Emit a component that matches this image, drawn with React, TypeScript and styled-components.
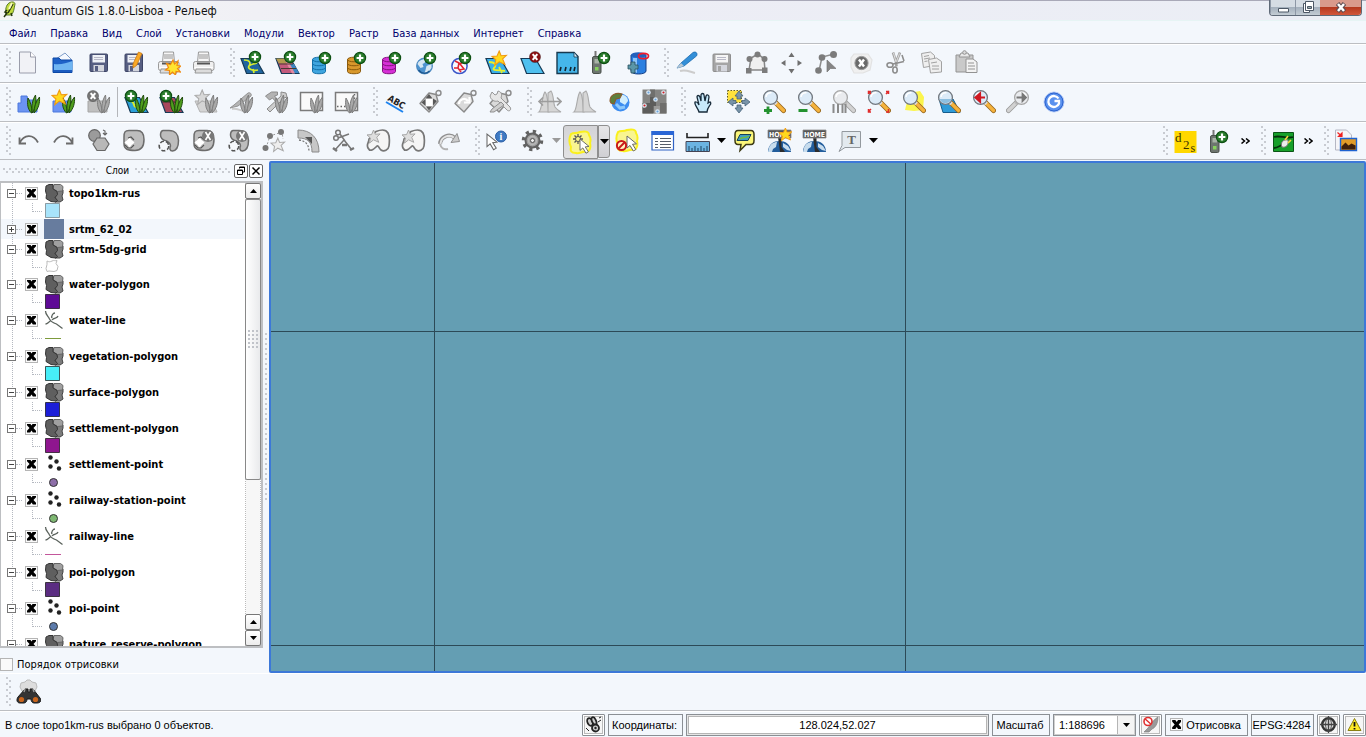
import React from "react";
import styled, { createGlobalStyle, css } from "styled-components";

const tahoma = `"DejaVu Sans Condensed", "DejaVu Sans", sans-serif`;
const arial = `"Liberation Sans", sans-serif`;
const dots = "#c8cbd1";
const line = "#bcbec2";

const GlobalStyle = createGlobalStyle`
  *, *::before, *::after { box-sizing: border-box; }
  body { margin: 0; background: #f3f7fc; color: #000; font: 11px/14px ${tahoma}; }
  button, input, select { font: inherit; color: inherit; margin: 0; }
  svg { display: block; flex: none; }
`;

/* ---------- shared drawing parts ---------- */

const G = "#8a8a8a";

const Plus = ({ x = 15, y = 8 }: { x?: number; y?: number }) => (
  <g>
    <circle cx={x} cy={y} r="5.600" fill="#2a7d2c" stroke="#0d4f13" strokeWidth="1.200" />
    <path d={`M${x - 3.4} ${y}h6.800M${x} ${y - 3.4}v6.800`} stroke="#fff" strokeWidth="2.200" />
  </g>
);
const Cross = ({ x = 14, y = 8, fill = "#8b1214" }: { x?: number; y?: number; fill?: string }) => (
  <g>
    <circle cx={x} cy={y} r="5.600" fill={fill} stroke="#0004" strokeWidth="1" />
    <path d={`M${x - 2.3} ${y - 2.8}l4.600 5.600M${x + 2.3} ${y - 2.8}l-4.600 5.600`} stroke="#fff" strokeWidth="2" />
  </g>
);
const Star = ({ x = 0, y = 0, s = 1, fill = "#ffd91c", stroke = "#f09a12" }: { x?: number; y?: number; s?: number; fill?: string; stroke?: string }) => (
  <path transform={`translate(${x} ${y}) scale(${s})`} d="M8 0l2.100 5.200 5.900-.4-4.200 4 2.600 6.200L8 12l-5 4 1.200-6.200L0 6l5.600-.4z" fill={fill} stroke={stroke} strokeWidth="1.200" />
);
const Db = ({ fill, edge }: { fill: string; edge: string }) => (
  <g fill={fill} stroke={edge} strokeWidth="1">
    <path d="M2.500 9.500v12c0 3 13 3 13 0v-12z" />
    <ellipse cx="9" cy="9.500" rx="6.500" ry="2.300" />
    <path d="M2.500 13.500c0 3 13 3 13 0M2.500 17.500c0 3 13 3 13 0" fill="none" />
  </g>
);
const Sheet = ({ fill = "#3ab0e8" }: { fill?: string }) => (
  <path d="M1 8.500h14.500L24 23.500H6.500z" fill={fill} stroke="#163a56" strokeWidth="1.200" />
);
const Grass = ({ gray = false }: { gray?: boolean }) => (
  <g fill={gray ? "#a9a9a9" : "#4f9e1d"} stroke={gray ? "#7d7d7d" : "#1f4a0c"} strokeWidth="1">
    <path d="M15.500 24C11.500 20 11 15 12 9c2.500 4 4 9 4 15z" />
    <path d="M16.500 24c-1.500-7 0-13 3-18 1 6 0 13-3 18z" />
    <path d="M18 24c0-6 2-12 5.500-16 .5 6-1 12-5.500 16z" />
  </g>
);
const Printer = () => (
  <g stroke="#8e8e8e" strokeWidth=".9">
    <path d="M7.500 2h10l1 10h-12z" fill="#f6f6f6" />
    <path d="M8 4h9v5H8z" fill="#c6c6c6" stroke="none" />
    <rect x="2.500" y="11.500" width="20.500" height="9" rx="2" fill="#f0f0f0" />
    <path d="M6 12.500h13v2H6z" fill="#555" stroke="none" />
    <path d="M5 19h15l1 4H4z" fill="#dcdcdc" />
    <path d="M3.500 17.500h18.500" stroke="#fff" />
  </g>
);
const Floppy = ({ body = "#565e82", edge = "#3d4566", paper = "#eef1f6" }: { body?: string; edge?: string; paper?: string }) => (
  <g>
    <rect x="4" y="4" width="17.500" height="17.500" rx="1" fill={body} stroke={edge} />
    <path d="M6.500 5h12.500v7.500H6.500z" fill={paper} />
    <path d="M8 7.500h9M8 9.500h9" stroke="#aab" strokeWidth=".8" />
    <path d="M7.500 15h10.500v6.500H7.500z" fill="#d4d6dd" />
    <path d="M9 16h3v5H9z" fill={body} />
  </g>
);
const Lens = ({ gray = false, flip = false, children }: { gray?: boolean; flip?: boolean; children?: React.ReactNode }) => (
  <g>
    <g transform={flip ? "translate(25 0) scale(-1 1)" : undefined}>
      <path d="M14.500 13.500l8 8" stroke={gray ? "#9b9b9b" : "#9a6a20"} strokeWidth="5" strokeLinecap="round" />
      <path d="M15 14l7.500 7.500" stroke={gray ? "#d2d2d2" : "#f6b33c"} strokeWidth="3.200" strokeLinecap="round" />
      <path d="M13 12.500l2.500 2.500" stroke={gray ? "#bbb" : "#dcdcdc"} strokeWidth="3.500" />
      <circle cx="9.500" cy="8.500" r="6.900" fill={gray ? "#e9ebee" : "#dcebf8"} stroke={gray ? "#a7a7a7" : "#71777e"} strokeWidth="1.300" />
      <path d="M5 8A4.500 4.500 0 0 1 10.500 3.800" stroke="#fff" strokeWidth="1.500" fill="none" />
    </g>
    {children}
  </g>
);
const Globe = ({ x = 9.5, y = 16, r = 8 }: { x?: number; y?: number; r?: number }) => (
  <g transform={`translate(${x} ${y}) scale(${r / 8})`}>
    <circle r="8" fill="#4d93cf" stroke="#3877b0" strokeWidth=".7" />
    <path d="M-7-2c1-4 6-5 9-5l-2 4-2 1 1 3-3 1zM2 0l5-2v4l-4 5-3 0 1-3z" fill="#d5e6f2" />
    <path d="M-6 4c3 4 8 4 11 1" stroke="#1d5890" fill="none" strokeWidth="1.500" />
  </g>
);
const Gps = () => (
  <g>
    <path d="M4.500 7V1h2v6z" fill="#777" />
    <rect x="2.500" y="6.500" width="8.500" height="17" rx="1.500" fill="#6d756f" stroke="#4a514c" />
    <path d="M4.500 9h4.500v4.500H4.500z" fill="#a8b3a6" />
    <path d="M5 17h3.500v3.500H5z" fill="#86d15d" />
  </g>
);
const Pointer = ({ x, y, s = 1 }: { x: number; y: number; s?: number }) => (
  <path transform={`translate(${x} ${y}) scale(${s})`} d="M0 0v12l3-2.600 3.300 5.600 2.500-1.500-3.300-5.200 4-.5z" fill="#fff" stroke="#666" strokeWidth="1" />
);
const YellowBlob = () => <path d="M3 4c3-2 5 0 9-2 4-1 9-1 9 3 2 3 2 5 1 8 1 4 0 9-4 9-4-1-6 2-10 1-5 0-6-2-5-6C1 13 1 8 3 4z" fill="#f9f590" stroke="#faf01e" strokeWidth="2" />;
const Home = ({ star = false }: { star?: boolean }) => (
  <g>
    <path d="M1 24c0-8 6-11 11.500-11S24 16 24 24z" fill="#225d9c" />
    <path d="M2 20c1-4 5-6 8-6l-1 5-3 2-1 3H1zM16 15l5 3 3 5-4-1-4-3z" fill="#c7dced" />
    <path d="M11 9h3.500v10L18 24h-5z" fill="#2c2c2c" />
    <path d="M1 2h23v8H1z" fill="#555" stroke="#8a8a8a" strokeWidth=".8" />
    <text x="12.500" y="8.500" textAnchor="middle" fontFamily="DejaVu Sans Condensed, sans-serif" fontSize="7" fontWeight="700" fill="#fff">HOME</text>
    {star && <Star x={12} y={0} s={0.8} />}
  </g>
);
const Ring = ({ open = false }: { open?: boolean }) => (
  <g>
    {open ? (
      <path d="M7 2.500h6c6 0 9.500 4 9.500 10 0 6-2 10-6 10.500-3 0-3-3-2-5 0-3-2-4-4-5-4-1-6-3-6-6 0-3 .5-4 2.500-4.500z" fill="#bdbdbd" stroke="#6c6c6c" strokeWidth="1.500" />
    ) : (
      <path d="M8 2.500h8c5 0 7 3 7 9s-2 11-9 11-11-1-11-7V9c0-5 1-6.500 5-6.500z" fill="#bdbdbd" stroke="#6c6c6c" strokeWidth="1.500" />
    )}
    {open ? (
      <circle cx="8" cy="18" r="4.800" fill="#f6f8fb" stroke="#555" strokeWidth="1.600" strokeDasharray="4 2" />
    ) : (
      <path d="M8.500 10.500c1 2 2 3 4 4-2 1-3 2-4 4-1-2-2-3-4-4 2-1 3-2 4-4z" fill="#fff" stroke="#fff" strokeWidth="1.600" strokeLinejoin="round" />
    )}
    {!open && <path d="M7 10l3-1 3 3M13 17l-3 3H7l-3-3" fill="none" stroke="#555" strokeWidth="1.100" />}
  </g>
);
const CrossTag = ({ x, y }: { x: number; y: number }) => (
  <g>
    <circle cx={x} cy={y} r="6" fill="#787878" />
    <path d={`M${x - 2.5} ${y - 4}l5 8M${x + 2.5} ${y - 4}l-5 8`} stroke="#fff" strokeWidth="1.600" />
  </g>
);
const StarShape = () => (
  <g>
    <path d="M10 3.500c5-2 10-2 12 1.500s1.500 9 1 13-5 6-8 4-2-6-5-3-6 5-8 1 1-5 1-9z" fill="#f5f5f5" stroke="#777" strokeWidth="1.700" />
    <Star x={1} y={2} s={0.82} fill="#dedede" stroke="#a5a5a5" />
  </g>
);
const Tag = () => (
  <g>
    <circle cx="20.500" cy="4" r="2.500" fill="none" stroke={G} strokeWidth="1.400" />
    <path d="M11 4l7 1.500 2 7L11 23 2 14.500z" fill="#dadada" stroke={G} strokeWidth="1.400" strokeLinejoin="round" />
  </g>
);
const Hist = () => (
  <g fill="#d6d6d6" stroke="#aaa" strokeWidth="1.100">
    <path d="M2 23c3-2 3-17 6-20 3 2 3 16 4 20z" />
    <path d="M11 23V4l3-2c3 4 2 12 4 16 2 3 4 4 6 5z" />
  </g>
);
const Curve = ({ flip = false }: { flip?: boolean }) => (
  <path transform={flip ? "translate(25 0) scale(-1 1)" : undefined} d="M3.500 15C8 6.500 17 5.500 22 14.500M3.500 9.500v6h6.500" fill="none" stroke="#6b6b6b" strokeWidth="1.800" />
);

/* ---------- toolbar icons, each on a 25 × 25 grid ---------- */

const icons: Record<string, React.ReactNode> = {
  new: <g stroke="#9a9dab"><path d="M3.500 2h11l5 5v16h-16z" fill="#f1f2f6" /><path d="M14.500 2v5h5" fill="#fff" /></g>,
  open: (
    <g>
      <path d="M5 9l9-6 6 6v5H5z" fill="#f5f9ff" stroke="#7d9cc9" />
      <path d="M2 8h6l2 2h11v12.500H2z" fill="#1e62c8" stroke="#0d48a6" />
      <path d="M3 14c7 1 12-1 18.500-3v9H3z" fill="#6fb5f2" />
      <path d="M3 20h18v2H3z" fill="#1c5cc0" />
    </g>
  ),
  save: <Floppy />,
  saveas: <g><Floppy /><path d="M12 14l5.500-12L21 3.500l-5.500 12L12 18z" fill="#f9a826" stroke="#c97a15" strokeWidth=".8" /></g>,
  composer: <g><Printer /><path d="M17 10l1.500 4 3.500-3-1 4.500 4 .5-3.500 2.500 3 3.500-4.500-.5-.5 3.500-3-3-3 3v-4.500l-4-.5 3-2.500-2-4 4 1z" fill="#ffe430" stroke="#f08a12" strokeWidth="1.200" /></g>,
  printer: <Printer />,
  addvector: <g><Sheet fill="#20659e" /><path d="M4 10c6 0 7 3 5 6s4 5 9 4M9 16c3-3 7-1 9-5M13 19l1 4" fill="none" stroke="#d8ec2e" strokeWidth="1.700" /><Plus y={7} /></g>,
  addraster: <g><Sheet fill="#c35a7c" /><path d="M1 8.500h8l3 5H4z" fill="#b29b4e" /><path d="M14 14h5l5 9h-5z" fill="#3c86c4" /><path d="M9 8.500h3l8 15h-3z" fill="#e58aa0" /><path d="M4 14h14M6 18.500h15" stroke="#4a3a32" strokeWidth="1.100" /><Plus y={7} /></g>,
  addpg: <g><Db fill="#3fa5df" edge="#1470a8" /><Plus /></g>,
  addspatialite: <g><Db fill="#d8982c" edge="#8a5a0d" /><Plus /></g>,
  addmssql: <g><Db fill="#d62fd6" edge="#83127f" /><Plus /></g>,
  addwms: <g><Globe /><Plus /></g>,
  addwfs: <g><circle cx="9.500" cy="16" r="7.600" fill="#f7f9ff" stroke="#3a55c8" strokeWidth="1.500" /><path d="M5 11l4 2-1 5 3 4M14 11l-4 3 4 5-5 1M4 18h4" stroke="#e2232f" strokeWidth="1.600" fill="none" /><Plus /></g>,
  newvector: <g><Sheet fill="#3ab0e8" /><path d="M4 12c6 0 8 3 5 6s6 2 11 3M14 17l3 6" fill="none" stroke="#e6f02e" strokeWidth="1.800" /><Star x={7} y={1} s={0.9} /></g>,
  remove: <g><Sheet fill="#4fc0ef" /><Cross x={15} y={7} /></g>,
  gpx: <g><path d="M2 2.500h17l4 4V23.500H2z" fill="#45b6ea" stroke="#17394f" strokeWidth="1.400" /><path d="M19 2v5h4z" fill="#d6eefb" stroke="#17394f" strokeWidth=".8" /><path d="M6 17l-1 4M11 17l-1 4M16 17l-1 4M20 17l-1 4" stroke="#12222c" strokeWidth="1.600" /></g>,
  gps: <g><Gps /><Plus x={14} y={8} /></g>,
  oracle: <g><path d="M6 5v16c0 4 15 4 15 0V5z" fill="#2b7fe0" stroke="#153f86" /><path d="M8 8v13l4 2V8z" fill="#8cc4fa" /><ellipse cx="13.500" cy="5" rx="7.500" ry="2.800" fill="#2461bd" /><ellipse cx="18.500" cy="6" rx="5" ry="2.700" fill="none" stroke="#ee1c2e" strokeWidth="1.700" /><path d="M3 15h3v-3h4v3h3v4h-3v4H6v-4H3z" fill="#5a96a8" stroke="#29505e" strokeWidth=".8" /></g>,

  edit: <g><path d="M6 21c6-2 10 1 15 2" fill="none" stroke="#ccc" strokeWidth="2" /><path d="M3 18l4-5L19 2.500c3-1.500 5 1 3.500 3.500L10 16z" fill="#338fd8" stroke="#1c6cb0" strokeWidth=".8" /><path d="M2.500 18.500l4.500-5.500 3 3z" fill="#b9c8d3" /></g>,
  saveedit: <Floppy body="#a5a5a5" edge="#8e8e8e" paper="#f5f5f5" />,
  addfeature: <g><path d="M5 20L7 8l7-4 6 5 1 11z" fill="#efefef" stroke="#868686" strokeWidth="1.500" /><g fill="#7c7c7c"><circle cx="13.500" cy="4.500" r="3" /><circle cx="5.500" cy="9" r="3" /><circle cx="20.500" cy="9" r="3" /><path d="M2 18h5.500v5.500H2zM18 17.500h5.500V23H18z" /></g></g>,
  movefeature: <path d="M12.500 2.500l3 4.500h-6zM12.500 23.500l3-4.500h-6zM2 13l4.500-3v6zM23 13l-4.500-3v6z" fill="#6f6f6f" />,
  nodetool: <g><path d="M5 21L8 7l12-3" fill="none" stroke="#8c8c8c" strokeWidth="1.500" /><g fill="#7b7b7b"><circle cx="4.500" cy="20.500" r="3.300" /><circle cx="8" cy="7.500" r="3.300" /><circle cx="19.500" cy="4.500" r="3.500" /></g><path d="M13 10v12l3.500-3.500h5.500z" fill="#858585" stroke="#777" strokeWidth=".7" /></g>,
  deletesel: <g><path d="M5 4h14l4 6-2 10-7 3H5l-3-6V8z" fill="#f0f0f0" stroke="#e2e2e2" strokeWidth="1.200" /><circle cx="12.500" cy="13" r="6.600" fill="#6a6a6a" stroke="#999" /><path d="M10 9.500l5 7M15 9.500l-5 7" stroke="#fff" strokeWidth="2.400" /></g>,
  cut: <g fill="none" stroke="#8d8d8d" strokeWidth="1.600"><path d="M9 2.500l3 9 .500 5M16 2.500l-4 10" stroke="#a2a2a2" strokeWidth="2.600" /><path d="M9.500 3l2.500 9M15.500 3.500l-3 8" stroke="#e0e0e0" strokeWidth="1" /><ellipse cx="6" cy="15" rx="3" ry="2.300" /><ellipse cx="11" cy="20" rx="2.200" ry="3" /><path d="M9 14l11-2.500M18 5l2 6" /></g>,
  copy: <g stroke="#a2a2a2" fill="#efefef"><path d="M2.500 3.500l9-1.500 4 3.500v10l-11 2z" /><path d="M9.500 9.500l8-1.500 5 3.500V22l-11 1z" /><path d="M5 6.500l5-1M5 9l6-1M5.500 11.500l3-.5M12 13l6-1M13 16h7M13 19h7" /></g>,
  paste: <g stroke="#939393"><path d="M2 5h17v17H2z" fill="#c9c9c9" /><path d="M7 3h7l2 4H5z" fill="#e8e8e8" /><circle cx="10.500" cy="2.500" r="1.800" fill="#ddd" /><path d="M12 9h7l4 3v10.500H12z" fill="#f3f3f3" /><path d="M14 13h6M14 16h7M14 19h7" /></g>,

  grassopen: <g><path d="M5 7h6l1 4h9v12H2V14h3z" fill="#6b93f2" stroke="#4d78dd" /><Grass /></g>,
  grassnew: <g><path d="M2 12h18v11H2z" fill="#6b93f2" stroke="#4d78dd" /><Grass /><Star x={1} y={1} s={0.92} /></g>,
  grassclose: <g><path d="M2 12h19v11H2z" fill="#bfbfbf" stroke="#a6a6a6" /><Grass gray /><Cross x={7} y={7} fill="#777" /></g>,
  grassvector: <g><Sheet fill="#2aa0d8" /><path d="M5 12c7 0 3 5 7 6s2 4 6 4" fill="none" stroke="#d8ec2e" strokeWidth="2" /><Grass /><Plus x={7} y={7} /></g>,
  grassraster: <g><Sheet fill="#a8485c" /><path d="M3 13h13l5 9M9 9l7 14" stroke="#3a332e" fill="none" strokeWidth="1.200" /><Grass /><Plus x={7} y={7} /></g>,
  grassstar: <g><path d="M1 12h17l5 11H6z" fill="#d4d4d4" stroke="#b3b3b3" /><Star x={1} y={1} s={0.9} fill="#d8d8d8" stroke="#acacac" /><Grass gray /></g>,
  grassedit: <g><path d="M1 19l4-3L19 4c2-1 4 1 3 3L9 17z" fill="#b5b5b5" stroke="#939393" /><path d="M3 20c4-1 7 1 12 2" stroke="#ccc" strokeWidth="2" fill="none" /><Grass gray /></g>,
  grasstools: <g><path d="M1.500 7l6-4h6v3l-3 1 8 9-2 2-8-9-3 2z" fill="#b3b3b3" stroke="#8c8c8c" /><path d="M3 20L17 7V3l5 1 1 4-3 1L6 23z" fill="#cdcdcd" stroke="#8c8c8c" /><Grass gray /></g>,
  grassregion: <g><path d="M1.500 3.500h22v18h-22z" fill="#fafafa" stroke="#7b7b7b" strokeWidth="1.500" /><Grass gray /></g>,
  grassregionedit: <g><path d="M1.500 3.500h22v18h-22z" fill="#fafafa" stroke="#7b7b7b" strokeWidth="1.500" /><path d="M3 17.500h20M20.500 5v5" stroke="#666" strokeDasharray="1.500 2" strokeWidth="1.500" /><Grass gray /></g>,

  label: <g><text transform="translate(4 11) rotate(30)" fontFamily="DejaVu Sans Condensed, sans-serif" fontSize="9" fontWeight="700" fill="#222">ABC</text><path d="M3 13l17 10" stroke="#1d83ee" strokeWidth="2" /></g>,
  labelmove: <g><Tag /><path d="M8 9.500h6.500V17H8z" fill="#fff" /><path d="M11 5l3.500 4.500h-7zM11 21.500l3-4H8zM3.500 13.500l4-3.500v7zM19 12l-4-2.500v7z" fill="#585858" /></g>,
  labelrotate: <g><Tag /><path d="M6 15a5 5 0 0 1 9-3M16.500 8v5.500H11" fill="none" stroke="#fff" strokeWidth="2.200" /></g>,
  labelchange: <g><Tag /><path d="M4 3l3 3 2-1 1-3c4 1 4 4 3 7l9 9c2 3-1 5-3 3l-9-9c-4 1-7-1-8-5z" fill="#e6e6e6" stroke="#979797" /><path d="M13 13l-9 7-2 3 4 0 10-7z" fill="#cfcfcf" stroke="#8f8f8f" /></g>,

  stretch: <g><Hist /><path d="M2 12.500h22M6 8.500l-4 4 4 4M20 8.500l4 4-4 4" fill="none" stroke="#9d9d9d" strokeWidth="1.600" /></g>,
  stretchfull: <Hist />,
  worldglobe: <g><circle cx="13.500" cy="13.500" r="9" fill="#3d8df0" /><path d="M13 6c5-1 8 3 8 6l-3 4-5-3z" fill="#d2eefd" /><path d="M9 15l4 4 5-1" stroke="#8cc8fa" strokeWidth="3" fill="none" /><path d="M3 12c0-6 6-9 12-7l-2 4-4 1-2 5-3-1z" fill="#5c7f3c" stroke="#8a5a2c" strokeWidth="1.100" /></g>,
  georef: <g><path d="M.5.500h24v24H.5z" fill="#858583" /><path d="M.5 14h11v10.500H.5zM8 8h6v9H8z" fill="#5d5d5b" /><path d="M8 .5h5V8H8zM18 14h6.500v10.500H18z" fill="#6f6f6d" /><path d="M12 17h6v7.500h-6z" fill="#9b9b99" /><g stroke="#dce8f2" strokeWidth="1.200"><circle cx="6.500" cy="3.500" r="1.700" fill="#6ca5dd" /><circle cx="13.500" cy="10.500" r="1.700" fill="#6ca5dd" /><circle cx="15.500" cy="22.500" r="1.700" fill="#6ca5dd" /><circle cx="21.500" cy="3.500" r="1.700" fill="#d11f24" /><circle cx="2.500" cy="16.500" r="1.700" fill="#d11f24" /></g></g>,

  hand: <path d="M8 23c-1-4-5-7-4-10 2-1 3 1 4 3L6 8c0-2 2-2 3 0l1 4V6c0-2 3-2 3 0l1 6 1-5c1-2 3-1 3 1l-1 6 2-1c1 0 1 2 0 3-2 3-3 4-3 7z" fill="#c8e9fa" stroke="#182b3a" strokeWidth="1.300" />,
  pansel: <g><path d="M1.500 1.500h14v12h-14z" fill="#ffe23c" stroke="#5f5a27" strokeDasharray="1.500 1.500" /><path d="M13 2l4 5h-2v3h-4V7H9zM13 24l4-5h-2v-3h-4v3H9zM2 13l5-4v2.500h3v3H7V17zM24 13l-5-4v2.500h-3v3h3V17z" fill="#7893a8" stroke="#46637a" strokeWidth=".8" /></g>,
  zoomin: <Lens><path d="M3 21.500h8M7 17.500v7.500" stroke="#23922f" strokeWidth="2.800" /></Lens>,
  zoomout: <Lens><path d="M2.500 21.500h9" stroke="#23922f" strokeWidth="3" /></Lens>,
  zoomactual: <g><Lens gray /><path d="M2.500 24v-9M7 24v-9M11.500 24v-9M14.500 24v-9" stroke="#8a8a8a" strokeWidth="2" /></g>,
  zoomfull: <Lens><path d="M2.500 5V2.500H5M20 2.500h2.500V5M2.500 20v3H5M20 23h2.500v-3M2 2l3 3M23 2l-3 3M2 23l3-3" stroke="#e02a2a" strokeWidth="1.500" fill="none" /></Lens>,
  zoomsel: <g><path d="M8 4l11-2 4 6-1 13-9 1-9-1z" fill="#fbf54d" /><Lens /></g>,
  zoomlayer: <g><path d="M3 10h14l7 13.500H7z" fill="#2f9bd8" stroke="#155c8c" /><Lens /><path d="M3.500 10h12c-1 5-10 6-12 0z" fill="#8dbfe0" /></g>,
  zoomlast: <Lens><path d="M14 8.500H6M9 4.500l-4.500 4 4.500 4z" stroke="#cf1720" strokeWidth="2.200" fill="#cf1720" /></Lens>,
  zoomnext: <Lens gray flip><path d="M10.500 8.500h8M16.500 5L20 8.500 16.500 12z" stroke="#777" strokeWidth="1.800" fill="#777" /></Lens>,
  refresh: <g><circle cx="13" cy="13" r="10" fill="#5a91ee" stroke="#b9cdf5" /><circle cx="13" cy="13" r="9" fill="none" stroke="#2d63cf" /><path d="M17.500 9.500a5.500 5.500 0 1 0 .5 5V12h-4.500" fill="none" stroke="#fff" strokeWidth="2.300" /></g>,

  undo: <Curve />,
  redo: <Curve flip />,
  simplify: <g stroke="#666" strokeWidth="1.200"><circle cx="8.500" cy="7.500" r="5.800" fill="#9b9b9b" /><path d="M11 10h8l4 6-4 6.500h-8L7 16z" fill="#b8b8b8" /><path d="M17 2l2 1v3M17 5l2 2 2-2" fill="none" /></g>,
  addring: <Ring />,
  addpart: <Ring open />,
  delring: <g><Ring /><CrossTag x={17} y={8} /></g>,
  delpart: <g><Ring open /><CrossTag x={16} y={8} /></g>,
  reshape: <g><path d="M5 20l4-12 12-4 1 7" fill="none" stroke="#999" strokeDasharray="2 2" /><g fill="#777"><circle cx="4.500" cy="20" r="3" /><circle cx="9" cy="8" r="3" /><circle cx="20" cy="4" r="3" /></g><Star x={10} y={10} s={0.85} fill="#eee" stroke="#aaa" /></g>,
  offset: <g><path d="M2 2c13 0 21 8 21 22h-7c0-10-4-14-14-14z" fill="#c7c7c7" stroke="#8a8a8a" /><path d="M3 12c7 1 10 5 10 12" fill="none" stroke="#777" strokeDasharray="2 1.500" strokeWidth="1.300" /><path d="M9 9h7v7z" fill="#555" /></g>,
  split: <g fill="none" stroke="#777" strokeWidth="1.500"><circle cx="7" cy="4.500" r="2.300" /><circle cx="5" cy="10" r="2.300" /><path d="M9 6l5 7M7 10l11-4M13 12L4 22M13 12l8 10" /><path d="M2 20l4 3M19 22l4-2M11 17h5" strokeWidth="2.400" /></g>,
  merge: <StarShape />,
  mergeattr: <StarShape />,
  rotatepoint: <g><path d="M4 16a9 9 0 0 1 15-6" fill="none" stroke="#8f8f8f" strokeWidth="4" /><path d="M4.500 16a8.500 8.500 0 0 1 14-6" fill="none" stroke="#e4e4e4" strokeWidth="2" /><path d="M15 14.500l8.500-1-2.500-8z" fill="#ccc" stroke="#8f8f8f" /><path d="M4 16c1 4 4 6 8 5" fill="none" stroke="#b2b2b2" strokeWidth="2" /></g>,

  identify: <g><Pointer x={2} y={6} s={1.05} /><circle cx="16" cy="8.500" r="5.500" fill="#3f7ac2" stroke="#2c5fa6" /><text x="16" y="12" textAnchor="middle" fontFamily="Liberation Serif, serif" fontWeight="700" fontSize="10" fill="#fff">i</text></g>,
  gear: <g><circle cx="12.500" cy="12.500" r="9" fill="none" stroke="#626262" strokeWidth="3.500" strokeDasharray="3.200 3.869" /><circle cx="12.500" cy="12.500" r="7" fill="#a0a0a0" stroke="#626262" strokeWidth="2" /><circle cx="12.500" cy="12.500" r="4" fill="none" stroke="#b9b9b9" strokeWidth="1.500" /><circle cx="12.500" cy="12.500" r="2" fill="#eee" stroke="#555" /></g>,
  select: <g><YellowBlob /><path d="M10 4v10M5 9h10M6.500 5.500l7 7M13.500 5.500l-7 7" stroke="#555" strokeWidth="1.300" /><circle cx="10" cy="9" r="2.500" fill="#f9f590" stroke="#555" /><Pointer x={12} y={9} s={0.95} /></g>,
  deselect: <g><YellowBlob /><Pointer x={12} y={8} /><circle cx="6.500" cy="17.500" r="4.600" fill="#fff6c0" stroke="#c91a1a" strokeWidth="2" /><path d="M3.500 20.500l6-6" stroke="#c91a1a" strokeWidth="2" /></g>,
  table: <g><path d="M2 3.500h21.500v18.500H2z" fill="#fff" stroke="#2f62c4" strokeWidth="1.200" /><path d="M1.500 3h22.500v4H1.500z" fill="#2a66d6" /><path d="M5 10.500h3M5 13.500h3M5 16.500h3M5 19.500h3M10 10.500h11M10 13.500h11M10 16.500h11M10 19.500h11" stroke="#555d6a" /></g>,
  measure: <g><path d="M2 5v4.500h21V5" fill="none" stroke="#222" strokeWidth="1.600" /><path d="M1 13.500h23.500v10H1z" fill="#6cb4e2" stroke="#445" /><path d="M4 23v-5M7 23v-3M10 23v-5M13 23v-3M16 23v-5M19 23v-3M22 23v-5" stroke="#1d4460" /></g>,
  tips: <g><path d="M6 2.500h13q3 0 3 4v6q0 4-3 4h-5L8 22.500l1-6H6q-3 0-3-4v-6q0-4 3-4z" fill="#fbf67a" stroke="#3c3a16" strokeWidth="1.500" /><path d="M8 6.500h11l-3 6H5z" fill="#3f9cc0" stroke="#184258" /><path d="M8 11c3-3 5 0 9-3" fill="none" stroke="#6ebd3c" strokeWidth="1.500" /></g>,
  homestar: <Home star />,
  home: <Home />,
  text: <g><path d="M5 3.500h18.500v16H8l-6 4 3-6z" fill="#e3eaef" stroke="#93999e" /><text x="14.500" y="16" textAnchor="middle" fontFamily="Liberation Serif, serif" fontSize="13" fontWeight="700" fill="#666">T</text></g>,

  d2s: <g><path d="M1.500 2h22v22h-22z" fill="#ffd800" /><g fontFamily="Liberation Serif, serif" fill="#3b3200"><text x="2" y="13" fontSize="13">d</text><text x="10" y="20" fontSize="13">2</text><text x="17.500" y="23" fontSize="12">s</text></g></g>,
  plugin: <g><path d="M2.500 3.500h20v19h-20z" fill="#17a02a" stroke="#0a5516" /><path d="M3 8c6-2 12 2 19 0M3 19c5 0 5-3 9-3" stroke="#052f0c" fill="none" strokeWidth="1.800" /><path d="M11 18c-2-4 1-8 6-7 1 5-2 8-6 7z" fill="#ececec" stroke="#777" /><path d="M14 11l3-4M17 14l3-3" stroke="#f3d63b" strokeWidth="1.600" /></g>,
  pageimage: <g><path d="M1.500 2h11l5 5v15h-16z" fill="#f5f5f8" stroke="#b5b7c4" /><path d="M3.500 4.500l4 3.500M8 5v3.500H4.500z" fill="#e22" stroke="#e22" strokeWidth="1.200" /><path d="M6.500 10.500h16v12h-16z" fill="#e19b27" stroke="#1c62d1" strokeWidth="1.400" /><path d="M7.500 21.500v-3l4-4 3 3 3-2 4 2v4z" fill="#40200a" /></g>,
  binoculars: (
    <g>
      <path d="M9 3l2-2h3l2 2 4 1 1 4-2 4H6L4 8l1-4z" fill="#ddd" stroke="#bbb" />
      <path d="M9 10h3v3h2v-3h3l7 9c2 3 0 5-3 5h-3c-2 0-3-2-3-4h-4c0 2-1 4-3 4H4c-3 0-4-3-2-6z" fill="#343434" stroke="#1a1a1a" />
      <path d="M8 13l1-3M18 13l-1-3" stroke="#999" strokeWidth="1.500" />
      <circle cx="5.500" cy="20.500" r="2.600" fill="#c9641c" /><circle cx="19.500" cy="20.500" r="2.600" fill="#c9641c" />
    </g>
  ),
};

const Icon = ({ name }: { name: string }) => (
  <svg width="25" height="25" viewBox="0 0 25 25" aria-hidden="true">{icons[name]}</svg>
);

/* ---------- window frame ---------- */

const Window = styled.div`
  display: flex;
  flex-direction: column;
  height: 100vh;
  min-width: 1100px;
  background: #f3f7fc;
`;
const TitleBar = styled.header`
  display: flex;
  align-items: flex-start;
  height: 21px;
  padding: 0 4px 0 3px;
  border-top: 1px solid #a9a9b8;
  background: linear-gradient(90deg, #f5f5f5, #ededf5 30%, #ebeef5);
  box-shadow: inset 0 -1px #e6f4f4;
`;
const TitleText = styled.h1`
  flex: 1;
  margin: 0 0 0 5px;
  font: 12px/21px ${tahoma};
  color: #111;
`;
const Caption = styled.div`
  display: flex;
  margin-top: -1px;
  border: 1px solid #5f6a78;
  border-top: 0;
  border-radius: 0 0 4px 4px;
  overflow: hidden;
`;
const CaptionButton = styled.button<{ $close?: boolean }>`
  display: flex;
  align-items: center;
  justify-content: center;
  width: ${(p) => (p.$close ? 41 : 25)}px;
  height: 15px;
  padding: 0;
  border: 0;
  border-left: ${(p) => (p.$close ? "0" : "1px solid #8d97a5")};
  background: ${(p) =>
    p.$close
      ? "linear-gradient(#d99a8c 0 45%, #b53a20 50%, #d2553a)"
      : "linear-gradient(#d5dce3 0 45%, #a5b1bd 50%, #c3ccd4)"};
`;

const MenuBar = styled.nav`
  display: flex;
  height: 23px;
  padding-left: 2px;
  border-bottom: 1px solid ${line};
`;
const MenuItem = styled.button`
  padding: 3px 7px 0;
  border: 0;
  background: none;
  color: #00006c;
  white-space: nowrap;
`;

const Toolbar = styled.div<{ $short?: boolean }>`
  display: flex;
  align-items: flex-start;
  gap: 9px;
  height: ${(p) => (p.$short ? 38 : 39)}px;
  padding: 0 2px 0 6px;
  border-bottom: 1px solid ${line};
  box-shadow: inset 0 1px #fff;
`;
const Group = styled.div<{ $end?: boolean }>`
  display: flex;
  margin-left: ${(p) => (p.$end ? "auto" : "0")};
`;
const gripDots = css`
  background-image:
    radial-gradient(circle at 1px 1px, ${dots} 1px, transparent 1px),
    radial-gradient(circle at 4px 4px, ${dots} 1px, transparent 1px);
  background-size: 5px 6px;
`;
const Grip = styled.span`
  width: 5px;
  height: 29px;
  margin-top: 4px;
  ${gripDots}
`;
const ToolButton = styled.button<{ $on?: boolean }>`
  padding: ${(p) => (p.$on ? "3px 4px 3px" : "6px 5px")};
  margin: ${(p) => (p.$on ? "3px 0 0 1px" : "0")};
  border: ${(p) => (p.$on ? "1px solid #8f8f8f" : "0")};
  border-radius: ${(p) => (p.$on ? "3px 0 0 3px" : "0")};
  background: ${(p) => (p.$on ? "linear-gradient(#d3d3d6, #e2e2e4)" : "none")};
`;
const DropButton = styled.button<{ $on?: boolean }>`
  display: flex;
  align-items: center;
  justify-content: center;
  width: 12px;
  height: ${(p) => (p.$on ? 33 : 37)}px;
  margin-top: ${(p) => (p.$on ? 3 : 0)}px;
  padding: 0;
  border: ${(p) => (p.$on ? "1px solid #8f8f8f" : "0")};
  border-radius: ${(p) => (p.$on ? "0 3px 3px 0" : "0")};
  background: ${(p) => (p.$on ? "linear-gradient(#e6e6e8, #d0d0d4)" : "none")};
`;
const MoreButton = styled.button`
  display: flex;
  align-items: center;
  justify-content: center;
  width: 14px;
  height: 38px;
  padding: 0;
  border: 0;
  background: none;
`;
const Separator = styled.span`
  width: 1px;
  height: 30px;
  margin: 4px 1px 0;
  background: #b4b6ba;
`;

const Arrow = ({ color = "#000", up = false }: { color?: string; up?: boolean }) => (
  <svg width="9" height="5" viewBox="0 0 9 5" aria-hidden="true">
    <path d={up ? "M0 5L4.500 0 9 5z" : "M0 0h9L4.500 5z"} fill={color} />
  </svg>
);
const SmallArrow = ({ up = false }: { up?: boolean }) => (
  <svg width="7" height="4" viewBox="0 0 7 4" aria-hidden="true">
    <path d={up ? "M0 4L3.500 0 7 4z" : "M0 0h7L3.500 4z"} />
  </svg>
);

const Tools = ({ names }: { names: string[] }) => (
  <>
    {names.map((n) => (
      <ToolButton key={n} aria-label={n}><Icon name={n} /></ToolButton>
    ))}
  </>
);
const Split = ({ name, on, color }: { name: string; on?: boolean; color?: string }) => (
  <>
    <ToolButton $on={on} aria-label={name}><Icon name={name} /></ToolButton>
    <DropButton $on={on} aria-label={`${name} menu`}><Arrow color={color} /></DropButton>
  </>
);
const More = () => (
  <MoreButton aria-label="more">
    <svg width="9" height="6" viewBox="0 0 9 6" aria-hidden="true">
      <path d="M.5.500L3.500 3 .5 5.500M5 .5L8 3 5 5.500" fill="none" stroke="#000" strokeWidth="1.500" />
    </svg>
  </MoreButton>
);

/* ---------- layers panel ---------- */

const Main = styled.main`
  display: flex;
  flex: 1;
  min-height: 0;
`;
const Dock = styled.section`
  display: flex;
  flex-direction: column;
  flex: none;
  width: 263px;
`;
const DockTitle = styled.div`
  display: flex;
  align-items: center;
  gap: 1px;
  height: 21px;
  padding-left: 3px;
`;
const DockDots = styled.span`
  flex: 1;
  height: 5px;
  background-image:
    radial-gradient(circle at 1px 1px, ${dots} 1px, transparent 1px),
    radial-gradient(circle at 4px 4px, ${dots} 1px, transparent 1px);
  background-size: 6px 5px;
`;
const DockName = styled.h2`
  margin: 0 5px 0 7px;
  font: 10px/14px ${tahoma};
`;
const DockButton = styled.button`
  width: 14px;
  height: 14px;
  padding: 1px;
  border: 1px solid #666;
  border-radius: 2px;
  background: #fff;
  &:first-of-type { margin-left: 3px; }
`;
const TreeFrame = styled.div`
  display: flex;
  flex: 1;
  min-height: 0;
  border: 2px solid #bdbfc2;
  border-left-width: 1px;
  background: #fff;
`;
const Tree = styled.ul`
  flex: 1;
  margin: 0;
  padding: 0;
  overflow: hidden;
  list-style: none;
`;
const stem = "repeating-linear-gradient(#b4b8c0 0 1px, transparent 1px 2px) 11px 0 / 1px 100% no-repeat";
const LayerRow = styled.div<{ $alt?: boolean }>`
  display: flex;
  align-items: center;
  height: 20px;
  padding-left: 6px;
  background: ${stem}, ${(p) => (p.$alt ? "#f3f7fc" : "transparent")};
`;
const Expander = styled.button`
  width: 9px;
  height: 9px;
  padding: 0;
  border: 1px solid #777;
  background: #fff;
`;
const Branch = styled.span`
  width: 6px;
  margin-right: 3px;
  border-top: 1px dotted #b4b8c0;
`;
const LayerName = styled.label`
  display: flex;
  align-items: center;
  margin-left: 6px;
  font-weight: 700;
  white-space: nowrap;
`;
const NameText = styled.span`
  padding: 2px 0 0 5px;
`;
const SymbolRow = styled.div<{ $short?: boolean }>`
  display: flex;
  align-items: flex-start;
  gap: 2px;
  height: ${(p) => (p.$short ? 15 : 16)}px;
  padding-left: 31px;
  background: ${stem};
`;
const Elbow = styled.span`
  width: 10px;
  height: 9px;
  border: dotted #b4b8c0;
  border-width: 0 0 1px 1px;
`;
const Check = styled.input.attrs({ type: "checkbox" })`
  appearance: none;
  display: grid;
  place-items: center;
  flex: none;
  width: 13px;
  height: 13px;
  border: 1px solid #b5b5b5;
  background: #fafafa;
  &:checked::before {
    content: "";
    width: 9px;
    height: 9px;
    background: #000;
    clip-path: polygon(0 0, 35% 0, 50% 22%, 65% 0, 100% 0, 100% 20%, 72% 50%, 100% 80%, 100% 100%, 65% 100%, 50% 78%, 35% 100%, 0 100%, 0 80%, 28% 50%, 0 20%);
  }
`;
const ScrollBar = styled.div`
  display: flex;
  flex-direction: column;
  width: 16px;
  border: dotted #bbb;
  border-width: 0 1px;
`;
const ScrollButton = styled.button`
  display: flex;
  align-items: center;
  justify-content: center;
  height: 16px;
  margin: 0 -1px;
  padding: 0;
  border: 1px solid #777;
  border-radius: 2px;
  background: linear-gradient(#fff, #ececec);
`;
const Thumb = styled.div`
  display: flex;
  align-items: center;
  justify-content: center;
  flex: 282;
  margin: 0 -1px;
  border: 1px solid #888;
  border-radius: 2px;
  background: linear-gradient(90deg, #fff, #e9eaec);
`;
const ThumbDots = styled.span`
  width: 11px;
  height: 19px;
  background: radial-gradient(circle at 1px 1px, #c0c3c9 1px, transparent 1px) 0 0 / 4px 4px;
`;
const Trough = styled.div`
  flex: 135;
  background: #f7f7f7;
`;
const OrderRow = styled.label`
  display: flex;
  align-items: center;
  gap: 4px;
  height: 25px;
  padding-top: 7px;
`;
const OrderText = styled.span`
  padding-top: 1px;
`;
const Splitter = styled.div`
  display: flex;
  align-items: center;
  width: 6px;
  padding-left: 2px;
`;
const SplitterDots = styled.span`
  width: 3px;
  height: 168px;
  background: radial-gradient(circle at 1px 1px, ${dots} 1px, transparent 1px) 0 0 / 3px 5px;
`;

type Kind = "polygon" | "line" | "point" | "raster";
type Layer = { name: string; kind: Kind; color: string; blank?: boolean };
const layers: Layer[] = [
  { name: "topo1km-rus", kind: "polygon", color: "#a8e4fb" },
  { name: "srtm_62_02", kind: "raster", color: "#677c9e" },
  { name: "srtm-5dg-grid", kind: "polygon", color: "#fff", blank: true },
  { name: "water-polygon", kind: "polygon", color: "#5e0a96" },
  { name: "water-line", kind: "line", color: "#7d9b3c" },
  { name: "vegetation-polygon", kind: "polygon", color: "#47eef8" },
  { name: "surface-polygon", kind: "polygon", color: "#1c1ed8" },
  { name: "settlement-polygon", kind: "polygon", color: "#8f168f" },
  { name: "settlement-point", kind: "point", color: "#8d6ea8" },
  { name: "railway-station-point", kind: "point", color: "#7eb872" },
  { name: "railway-line", kind: "line", color: "#c3569b" },
  { name: "poi-polygon", kind: "polygon", color: "#5b2d82" },
  { name: "poi-point", kind: "point", color: "#5c7bab" },
  { name: "nature_reserve-polygon", kind: "polygon", color: "#5b2d82" },
];

const LayerIcon = ({ kind, color }: { kind: Kind; color: string }) => (
  <svg width="20" height="20" viewBox="0 0 20 20" aria-hidden="true">
    {kind === "polygon" && (
      <g strokeWidth="1">
        <path d="M12 7h7v3l-1 3 1 4-3 2h-5z" fill="#7c7c7c" stroke="#444" />
        <path d="M10 1.500h6.500l2.500 2-.5 4.500-5 .5-4.500-3z" fill="#a0a0a0" stroke="#666" />
        <path d="M2 3l3-1.500h4L9 6l4 2.500.5 3-2.500 3 2.500 3-1.500 1.500-5-.5L2 15.500l.5-4L1.500 8z" fill="#5f5f5f" stroke="#353535" />
      </g>
    )}
    {kind === "line" && <path d="M1.500 1c0 4 3 5 4 8 1 2 4 4 7 5l6 4.500M6.500 11c-2 1-3 3-5 3M8 8c-1-2 1-5 3-5M8 10c2-3 5-1 6-4" fill="none" stroke="#5a625c" strokeWidth="1.300" />}
    {kind === "point" && <g fill="#222"><circle cx="6.500" cy="3.500" r="2.200" /><circle cx="12.500" cy="7.500" r="2.200" /><circle cx="6.500" cy="12.500" r="2.200" /><circle cx="15" cy="14.500" r="2.200" /></g>}
    {kind === "raster" && <path d="M0 0h20v20H0z" fill={color} />}
  </svg>
);
const SymbolIcon = ({ kind, color, blank }: Layer) => (
  <svg width="17" height="16" viewBox="0 0 17 16" aria-hidden="true">
    {blank && <path d="M3 2c2 1 3 1 5 0s3 0 5-.5l-1 3 2 3-1 4-3 1-5-.5-2 .5-1-3 1-4z" fill="#fff" stroke="#bbb" />}
    {kind === "polygon" && !blank && <path d="M1.500.500h14v14h-14z" fill={color} stroke="#000" strokeOpacity={color === "#a8e4fb" ? 0.35 : 0.65} />}
    {kind === "line" && <path d="M1 8h16v1H1z" fill={color} />}
    {kind === "point" && <circle cx="9.500" cy="8.500" r="4" fill={color} stroke="#333" />}
  </svg>
);

/* ---------- map ---------- */

const MapCanvas = styled.div`
  flex: 1;
  min-width: 0;
  margin-top: 1px;
  border: 2px solid #3c78d8;
  border-radius: 2px;
  background: #649eb3;
  svg { width: 100%; height: 100%; }
`;

/* ---------- bottom bars ---------- */

const StatusBar = styled.footer`
  display: flex;
  align-items: center;
  gap: 3px;
  height: 26px;
  padding-top: 1px;
  font-family: ${arial};
  box-shadow: inset 0 1px #fff;
`;
const Message = styled.p`
  flex: 1;
  margin: 0;
  padding-left: 5px;
  white-space: nowrap;
`;
const Cell = styled.label<{ $w: number }>`
  display: flex;
  align-items: center;
  justify-content: center;
  gap: 3px;
  width: ${(p) => p.$w}px;
  height: 22px;
  padding-right: 2px;
  border: 1px solid #8b8f94;
  white-space: nowrap;
`;
const StatusButton = styled.button`
  display: flex;
  align-items: center;
  justify-content: center;
  width: 23px;
  height: 22px;
  padding: 0;
  border: 1px solid #8b8f94;
  border-radius: 1px;
  background: #f6f6f6;
  box-shadow: inset 0 0 0 1px #fff, inset 0 0 0 2px #bbb;
`;
const Coordinates = styled.input`
  width: 303px;
  height: 22px;
  padding: 0;
  border: 1px solid #8b8f94;
  background: #fff;
  box-shadow: inset 0 0 0 1px #e6e6e6, inset 0 0 0 2px #b5b5b5;
  text-align: center;
`;
const ScaleBox = styled.div`
  display: grid;
  grid-template: 20px / 1fr 17px;
  align-items: center;
  justify-items: center;
  width: 83px;
  height: 22px;
  border: 1px solid #8b8f94;
  background: #fff;
  svg { grid-area: 1 / 2; pointer-events: none; }
`;
const ScaleSelect = styled.select`
  grid-area: 1 / 1 / 2 / 3;
  width: 100%;
  height: 20px;
  padding: 0 0 0 4px;
  border: 1px solid #d0d0d0;
  appearance: none;
  background: linear-gradient(90deg, #b5b5b5 1px, #f4f4f4 1px) right / 17px 18px no-repeat;
`;

const menu = ["Файл", "Правка", "Вид", "Слой", "Установки", "Модули", "Вектор", "Растр", "База данных", "Интернет", "Справка"];

export default function App() {
  return (
    <Window>
      <GlobalStyle />
      <TitleBar>
        <svg width="14" height="18" viewBox="0 0 14 18" aria-hidden="true">
          <path d="M6 2c3-2 6-1 6 1-1 4-1 9-4 11H3C2 9 3 4 6 2z" fill="#c3dc3c" stroke="#5c7d2c" />
          <path d="M10 3L5 12M4 9l-2 2 2 1-3 4M8 12l1 3" stroke="#26350e" strokeWidth="1.500" fill="none" />
          <path d="M9 2L6 8" stroke="#f8fbc0" strokeWidth="1.800" />
        </svg>
        <TitleText>Quantum GIS 1.8.0-Lisboa - Рельеф</TitleText>
        <Caption>
          <CaptionButton aria-label="Minimize">
            <svg width="11" height="11" viewBox="0 0 11 11"><path d="M.5 6.500h10v3.500H.5z" fill="#fff" stroke="#4d5866" /></svg>
          </CaptionButton>
          <CaptionButton aria-label="Restore">
            <svg width="13" height="13" viewBox="0 0 13 13"><path d="M1.500 2.500h6v9h-6z" fill="#fff" stroke="#4d5866" /><path d="M3.500.500h8v9h-8z" fill="#fff" stroke="#4d5866" /><path d="M5.500 5.500h4v2h-4z" fill="#9aa" stroke="#4d5866" /></svg>
          </CaptionButton>
          <CaptionButton $close aria-label="Close">
            <svg width="12" height="11" viewBox="0 0 12 11"><path d="M2.500 1.500l7 8M9.500 1.500l-7 8" stroke="#5a4a50" strokeWidth="4.500" /><path d="M3 2l6 7M9 2L3 9" stroke="#fff" strokeWidth="2.500" /></svg>
          </CaptionButton>
        </Caption>
      </TitleBar>

      <MenuBar>{menu.map((m) => <MenuItem key={m}>{m}</MenuItem>)}</MenuBar>

      <Toolbar>
        <Group><Grip /><Tools names={["new", "open", "save", "saveas", "composer", "printer"]} /></Group>
        <Group><Grip /><Tools names={["addvector", "addraster", "addpg", "addspatialite", "addmssql", "addwms", "addwfs", "newvector", "remove", "gpx", "gps", "oracle"]} /></Group>
        <Group><Grip /><Tools names={["edit", "saveedit", "addfeature", "movefeature", "nodetool", "deletesel", "cut", "copy", "paste"]} /></Group>
      </Toolbar>
      <Toolbar>
        <Group>
          <Grip /><Tools names={["grassopen", "grassnew", "grassclose"]} /><Separator />
          <Tools names={["grassvector", "grassraster", "grassstar", "grassedit", "grasstools", "grassregion", "grassregionedit"]} />
        </Group>
        <Group><Grip /><Tools names={["label", "labelmove", "labelrotate", "labelchange"]} /></Group>
        <Group><Grip /><Tools names={["stretch", "stretchfull", "worldglobe", "georef"]} /></Group>
        <Group><Grip /><Tools names={["hand", "pansel", "zoomin", "zoomout", "zoomactual", "zoomfull", "zoomsel", "zoomlayer", "zoomlast", "zoomnext", "refresh"]} /></Group>
      </Toolbar>
      <Toolbar $short>
        <Group><Grip /><Tools names={["undo", "redo", "simplify", "addring", "addpart", "delring", "delpart", "reshape", "offset", "split", "merge", "mergeattr", "rotatepoint"]} /></Group>
        <Group>
          <Grip /><Tools names={["identify"]} />
          <Split name="gear" color="#9a9a9a" />
          <Split name="select" on />
          <Tools names={["deselect", "table"]} />
          <Split name="measure" />
          <Tools names={["tips", "homestar", "home"]} />
          <Split name="text" />
        </Group>
        <Group $end><Grip /><Tools names={["d2s", "gps"]} /><More /></Group>
        <Group><Grip /><Tools names={["plugin"]} /><More /></Group>
        <Group><Grip /><Tools names={["pageimage"]} /></Group>
      </Toolbar>

      <Main>
        <Dock>
          <DockTitle>
            <DockDots /><DockName>Слои</DockName><DockDots />
            <DockButton aria-label="Float">
              <svg width="10" height="10" viewBox="0 0 10 10"><path d="M3.500 2.500V1h5v5H7M3 1.500h6M1.500 4h5v4.500h-5zM1 4.500h6" fill="none" stroke="#000" /></svg>
            </DockButton>
            <DockButton aria-label="Close panel">
              <svg width="10" height="10" viewBox="0 0 10 10"><path d="M1.500 1.500l7 7M8.500 1.500l-7 7" stroke="#000" strokeWidth="1.500" /></svg>
            </DockButton>
          </DockTitle>
          <TreeFrame>
            <Tree>
              {layers.map((l) => (
                <li key={l.name}>
                  <LayerRow $alt={l.kind === "raster"}>
                    <Expander aria-label="expand">
                      <svg width="7" height="7" viewBox="0 0 7 7"><path d={l.kind === "raster" ? "M1 3.500h5M3.500 1v5" : "M1 3.500h5"} stroke="#444" /></svg>
                    </Expander>
                    <Branch />
                    <Check id={l.name} defaultChecked />
                    <LayerName htmlFor={l.name}><LayerIcon kind={l.kind} color={l.color} /><NameText>{l.name}</NameText></LayerName>
                  </LayerRow>
                  {l.kind !== "raster" && <SymbolRow $short={l.blank}><Elbow /><SymbolIcon {...l} /></SymbolRow>}
                </li>
              ))}
            </Tree>
            <ScrollBar>
              <ScrollButton aria-label="Scroll up"><SmallArrow up /></ScrollButton>
              <Thumb><ThumbDots /></Thumb>
              <Trough />
              <ScrollButton aria-label="Line up"><SmallArrow up /></ScrollButton>
              <ScrollButton aria-label="Scroll down"><SmallArrow /></ScrollButton>
            </ScrollBar>
          </TreeFrame>
          <OrderRow><Check /><OrderText>Порядок отрисовки</OrderText></OrderRow>
        </Dock>
        <Splitter><SplitterDots /></Splitter>
        <MapCanvas>
          <svg role="img" aria-label="Map">
            <path d="M163.500 0v2000M634.500 0v2000M0 168.500h4000M0 482.500h4000" stroke="#2c4a57" strokeWidth="1" />
          </svg>
        </MapCanvas>
      </Main>

      <Toolbar $short>
        <Group><Grip /><Tools names={["binoculars"]} /></Group>
      </Toolbar>

      <StatusBar>
        <Message>В слое topo1km-rus выбрано 0 объектов.</Message>
        <StatusButton aria-label="Toggle extents">
          <svg width="17" height="17" viewBox="0 0 17 17"><g fill="#ccc" stroke="#222" strokeWidth="1.800"><ellipse cx="5" cy="6" rx="2.500" ry="4" transform="rotate(-25 5 6)" /><ellipse cx="9" cy="5" rx="2" ry="4" transform="rotate(-25 9 5)" /><circle cx="10.500" cy="12" r="3.500" /></g><circle cx="10.500" cy="12" r="1.200" fill="#222" /><path d="M1 12l3 3M14 2l2-1M13 6l3-2" stroke="#222" /></svg>
        </StatusButton>
        <Cell $w={75} htmlFor="coords">Координаты:</Cell>
        <Coordinates id="coords" defaultValue="128.024,52.027" />
        <Cell $w={58} htmlFor="scale">Масштаб</Cell>
        <ScaleBox>
          <ScaleSelect id="scale"><option>1:188696</option></ScaleSelect>
          <SmallArrow />
        </ScaleBox>
        <StatusButton aria-label="Stop rendering">
          <svg width="17" height="17" viewBox="0 0 17 17"><path d="M16 1c0 7-3 11-6 12l-3 3H2l4-4c3-4 6-9 10-11z" fill="#9a9a9a" stroke="#777" strokeWidth=".6" /><circle cx="6" cy="5.500" r="4" fill="#fff" stroke="#e03030" strokeWidth="1.600" /><path d="M3.200 3l5.600 5" stroke="#e03030" strokeWidth="1.500" /></svg>
        </StatusButton>
        <Cell $w={83}><Check defaultChecked />Отрисовка</Cell>
        <Cell $w={63} as="span">EPSG:4284</Cell>
        <StatusButton aria-label="CRS status">
          <svg width="17" height="17" viewBox="0 0 17 17"><circle cx="8.500" cy="8.500" r="6.300" fill="#ddd" stroke="#333" strokeWidth="2.400" /><ellipse cx="8.500" cy="8.500" rx="3" ry="6" fill="none" stroke="#555" /><path d="M2 8.500h13M8.500 0v17M0 8.500h2M15 8.500h2" stroke="#444" strokeWidth="1.300" /></svg>
        </StatusButton>
        <StatusButton aria-label="Messages">
          <svg width="15" height="15" viewBox="0 0 15 15"><path d="M7.500 1.500l6.500 12H1z" fill="#ffe926" stroke="#8a8012" strokeLinejoin="round" /><path d="M7.500 5v4.500M7.500 11v1.500" stroke="#111" strokeWidth="1.800" /></svg>
        </StatusButton>
      </StatusBar>
    </Window>
  );
}
